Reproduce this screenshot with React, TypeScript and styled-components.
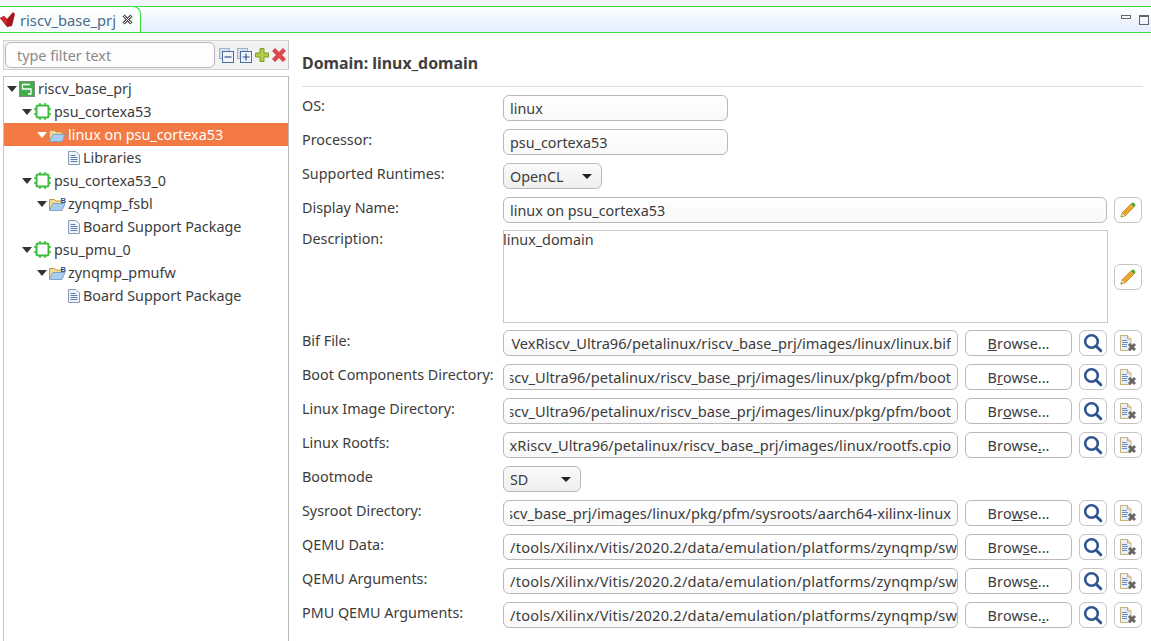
import React from 'react'
import styled, { createGlobalStyle } from 'styled-components'

const FONT = `'Noto Sans', 'Open Sans', sans-serif`

const GlobalStyle = createGlobalStyle`
  html, body { margin: 0; padding: 0; background: #fff; }
  body { font-family: ${FONT}; font-size: 14.35px; color: #3c3c3c; overflow: hidden; }
  * { box-sizing: border-box; }
`

type Row = { label: string; path: string; hot: number; start?: boolean }

const VITIS = '/tools/Xilinx/Vitis/2020.2/data/emulation/platforms/zynqmp/sw/'

const PATH_ROWS_1: Row[] = [
  { label: 'Bif File:', path: 'VexRiscv_Ultra96/petalinux/riscv_base_prj/images/linux/linux.bif', hot: 0 },
  { label: 'Boot Components Directory:', path: 'iscv_Ultra96/petalinux/riscv_base_prj/images/linux/pkg/pfm/boot', hot: 1 },
  { label: 'Linux Image Directory:', path: 'iscv_Ultra96/petalinux/riscv_base_prj/images/linux/pkg/pfm/boot', hot: 2 },
  { label: 'Linux Rootfs:', path: 'xRiscv_Ultra96/petalinux/riscv_base_prj/images/linux/rootfs.cpio', hot: 6 },
]

const PATH_ROWS_2: Row[] = [
  { label: 'Sysroot Directory:', path: 'iscv_base_prj/images/linux/pkg/pfm/sysroots/aarch64-xilinx-linux', hot: 3 },
  { label: 'QEMU Data:', path: VITIS, hot: 4, start: true },
  { label: 'QEMU Arguments:', path: VITIS, hot: 5, start: true },
  { label: 'PMU QEMU Arguments:', path: VITIS, hot: 7, start: true },
]

const TREE = [
  { depth: 0, kind: 'project', text: 'riscv_base_prj' },
  { depth: 1, kind: 'chip', text: 'psu_cortexa53' },
  { depth: 2, kind: 'folder', text: 'linux on psu_cortexa53', selected: true },
  { depth: 3, kind: 'doc', text: 'Libraries' },
  { depth: 1, kind: 'chip', text: 'psu_cortexa53_0' },
  { depth: 2, kind: 'bsp', text: 'zynqmp_fsbl' },
  { depth: 3, kind: 'doc', text: 'Board Support Package' },
  { depth: 1, kind: 'chip', text: 'psu_pmu_0' },
  { depth: 2, kind: 'bsp', text: 'zynqmp_pmufw' },
  { depth: 3, kind: 'doc', text: 'Board Support Package' },
]

function ProjectIcon() {
  return (
    <svg width="16" height="16" viewBox="0 0 16 16">
      <rect x="0.5" y="0.5" width="15" height="15" fill="#3fae49" stroke="#7d8f7f" />
      <path d="M11 3.5H3.5V8H12V13H9" fill="none" stroke="#fff" strokeWidth="1.3" />
    </svg>
  )
}

function ChipIcon() {
  return (
    <svg width="17" height="17" viewBox="0 0 17 17">
      <rect x="2.5" y="2.5" width="12" height="12" rx="1.5" fill="#fff" stroke="#3dbb3d" strokeWidth="2" />
      <path d="M6 0v2M11 0v2M6 15v2M11 15v2M0 6h2M0 11h2M15 6h2M15 11h2" stroke="#3dbb3d" strokeWidth="1.5" />
    </svg>
  )
}

function FolderIcon({ bsp }: { bsp?: boolean }) {
  return (
    <svg width="17" height="16" viewBox="0 0 17 16">
      <path d="M0.5 14V3.5h5l1.5 1.5h6v2" fill="#f3d896" stroke="#c49a4a" />
      <path d="M0.5 14.5L4 7.5h12l-3 7z" fill="#a9cdee" stroke="#7fa6c9" />
      {bsp && <text x="11.5" y="6.5" fontSize="7.5" fontWeight="700" fontFamily="'Liberation Sans', sans-serif" fill="#1f4f8f">B</text>}
    </svg>
  )
}

function DocIcon() {
  return (
    <svg width="12" height="14" viewBox="0 0 12 14">
      <path d="M0.5 0.5h7.5l3.5 3.5v9.5H0.5z" fill="#eef3fa" stroke="#8a9bb5" />
      <path d="M2.5 4.5h5M2.5 6.5h7M2.5 8.5h7M2.5 10.5h7" stroke="#5f7fb0" />
    </svg>
  )
}

const TREE_ICON: Record<string, React.ReactNode> = {
  project: <ProjectIcon />,
  chip: <ChipIcon />,
  folder: <FolderIcon />,
  bsp: <FolderIcon bsp />,
  doc: <DocIcon />,
}

function PencilIcon() {
  return (
    <svg width="16" height="16" viewBox="0 0 18 18">
      <path d="M1 17l1.2-4.6L12.6 2l3.4 3.4L5.6 15.8z" fill="#eda62c" stroke="#b5761a" strokeWidth="0.8" />
      <path d="M12.6 2l1-1c.6-.5 1.2-.5 1.8 0l1.6 1.6c.5.6.5 1.2 0 1.8l-1 1z" fill="#37a52f" />
      <path d="M1 17l1.2-4.6 3.4 3.4z" fill="#f3e2b4" />
      <path d="M1 17l.5-2 1.5 1.5z" fill="#2d8a2a" />
    </svg>
  )
}

function SearchIcon() {
  return (
    <svg width="20" height="20" viewBox="0 0 20 20">
      <circle cx="8.5" cy="8.5" r="6.3" fill="#fff" stroke="#2f5590" strokeWidth="2.6" />
      <path d="M13.5 13.5l4.3 4.3" stroke="#2f5590" strokeWidth="3" strokeLinecap="round" />
    </svg>
  )
}

function RemoveFileIcon() {
  return (
    <svg width="16" height="17" viewBox="0 0 16 17">
      <path d="M0.5 0.5h7l3.5 3.5v11.5H0.5z" fill="#e8eef8" stroke="#c9b27a" />
      <path d="M7.5 0.5v3.5H11" fill="#f4e6bd" stroke="#c9a85e" />
      <path d="M2 5.5h5M2 7.5h6M2 9.5h5M2 11.5h5" stroke="#6d8cc0" />
      <path d="M9 9l6 6M15 9l-6 6" stroke="#666" strokeWidth="3" />
    </svg>
  )
}

function CollapseIcon({ plus }: { plus?: boolean }) {
  return (
    <svg width="15" height="15" viewBox="0 0 15 15">
      <rect x="0.5" y="0.5" width="10" height="10" fill="#d5e1ef" stroke="#9db4cf" />
      <rect x="3.5" y="3.5" width="11" height="11" fill="#eef3fa" stroke="#4a6f9c" />
      <path d={plus ? 'M5.5 9h7M9 5.5v7' : 'M5.5 9h7'} stroke="#2f5590" strokeWidth="1.2" />
    </svg>
  )
}

function PlusIcon() {
  return (
    <svg width="14" height="14" viewBox="0 0 14 14">
      <path d="M5 0.5h4v4.5h4.5v4H9v4.5H5V9H0.5V5H5z" fill="#b4cc45" stroke="#7f9a2c" />
    </svg>
  )
}

function CrossIcon() {
  return (
    <svg width="14" height="14" viewBox="0 0 14 14">
      <path d="M1.5 1.5l11 11M12.5 1.5l-11 11" stroke="#d9484d" strokeWidth="4.4" />
    </svg>
  )
}

function Browse({ hot }: { hot: number }) {
  const word = 'Browse...'
  return (
    <BrowseButton>
      {word.split('').map((c, i) => (i === hot ? <u key={i}>{c}</u> : <span key={i}>{c}</span>))}
    </BrowseButton>
  )
}

function PathRow({ row }: { row: Row }) {
  return (
    <FormRow>
      <Label>{row.label}</Label>
      <PathInput $start={!!row.start}>
        <PathClip $start={!!row.start}><span>{row.path}</span></PathClip>
      </PathInput>
      <Browse hot={row.hot} />
      <IconButton><SearchIcon /></IconButton>
      <IconButton><RemoveFileIcon /></IconButton>
    </FormRow>
  )
}

export default function App() {
  return (
    <Page>
      <GlobalStyle />
      <TopStrip />
      <TabBar>
        <ActiveTab>
          <svg width="17" height="15" viewBox="0 0 17 15">
            <path d="M0 6l4-2 3 3 6-7 2 2-3 12-5 1z" fill="#a8171f" />
            <path d="M0 6l4-2 3 3v7z" fill="#d0282f" />
          </svg>
          <TabTitle>riscv_base_prj</TabTitle>
          <svg width="11" height="11" viewBox="0 0 11 11">
            <path d="M1.5 1.5l8 8M9.5 1.5l-8 8" stroke="#444" strokeWidth="3" />
            <path d="M1.5 1.5l8 8M9.5 1.5l-8 8" stroke="#fff" strokeWidth="1" />
          </svg>
        </ActiveTab>
        <TabControls>
          <MinimizeBox />
          <MaximizeBox />
        </TabControls>
      </TabBar>
      <Body>
        <Sidebar>
          <FilterBar>
            <FilterInput>type filter text</FilterInput>
            <FilterIcons>
              <CollapseIcon />
              <CollapseIcon plus />
              <PlusIcon />
              <CrossIcon />
            </FilterIcons>
          </FilterBar>
          <Tree>
            {TREE.map((n, i) => (
              <TreeRow key={i} $selected={!!n.selected} $depth={n.depth}>
                {n.kind !== 'doc' ? <Twisty $selected={!!n.selected} /> : <TwistySpace />}
                <TreeIcon $width={n.kind === 'chip' ? 20 : n.kind === 'doc' ? 18 : 19} $center={n.kind === 'doc'}>
                  {TREE_ICON[n.kind]}
                </TreeIcon>
                {n.text}
              </TreeRow>
            ))}
          </Tree>
        </Sidebar>
        <Detail>
          <Heading>Domain: linux_domain</Heading>
          <Rule />
          <Form>
            <FormRow>
              <Label>OS:</Label>
              <ReadOnlyInput>linux</ReadOnlyInput>
            </FormRow>
            <FormRow>
              <Label>Processor:</Label>
              <ReadOnlyInput>psu_cortexa53</ReadOnlyInput>
            </FormRow>
            <FormRow>
              <Label>Supported Runtimes:</Label>
              <Select $width={99}>OpenCL<Caret /></Select>
            </FormRow>
            <FormRow>
              <Label>Display Name:</Label>
              <WideInput>linux on psu_cortexa53</WideInput>
              <IconButton><PencilIcon /></IconButton>
            </FormRow>
            <DescriptionRow>
              <Label>Description:</Label>
              <DescriptionBox>linux_domain</DescriptionBox>
              <IconButton><PencilIcon /></IconButton>
            </DescriptionRow>
            {PATH_ROWS_1.map(r => <PathRow key={r.label} row={r} />)}
            <FormRow>
              <Label>Bootmode</Label>
              <Select $width={78}>SD<Caret /></Select>
            </FormRow>
            {PATH_ROWS_2.map(r => <PathRow key={r.label} row={r} />)}
          </Form>
        </Detail>
      </Body>
    </Page>
  )
}

const Page = styled.div`
  width: 1151px;
  height: 641px;
  display: flex;
  flex-direction: column;
  overflow: hidden;
`

const TopStrip = styled.div`
  height: 6px;
  background: #f0f5ff;
  flex: none;
`

const TabBar = styled.div`
  height: 27px;
  flex: none;
  display: flex;
  justify-content: space-between;
  align-items: stretch;
  border-top: 1px solid #3fdc3f;
  border-bottom: 1px solid #3fdc3f;
  background: linear-gradient(#fdfeff, #e4eeff);
`

const ActiveTab = styled.div`
  width: 141px;
  height: 26px;
  display: flex;
  align-items: center;
  gap: 3px;
  background: linear-gradient(#fff, #f4fbfb);
  border-right: 1px solid #3fdc3f;
  border-top-right-radius: 8px;
  margin-top: -1px;
  border-top: 1px solid #3fdc3f;
`

const TabTitle = styled.span`
  color: #4a6a8a;
  font-size: 14.7px;
  margin-right: 3px;
`

const TabControls = styled.div`
  display: flex;
  align-items: flex-start;
  gap: 8px;
  padding: 8px 2px 0 0;
`

const MinimizeBox = styled.div`
  width: 10px;
  height: 4px;
  border: 1px solid #666;
`

const MaximizeBox = styled.div`
  width: 10px;
  height: 10px;
  border: 1px solid #666;
  border-top-width: 2px;
`

const Body = styled.div`
  flex: 1;
  display: flex;
  min-height: 0;
`

const Sidebar = styled.div`
  width: 286px;
  margin-left: 3px;
  padding-top: 7px;
  flex: none;
  display: flex;
  flex-direction: column;
  gap: 6px;
`

const FilterBar = styled.div`
  height: 30px;
  display: flex;
  align-items: center;
  justify-content: space-between;
  padding: 0 1px;
  background: #f2f2f2;
  border: 1px solid #d4d4d4;
  border-right: 1px solid #c4c4c4;
`

const FilterInput = styled.div`
  width: 210px;
  height: 26px;
  display: flex;
  align-items: center;
  padding-left: 11px;
  color: #8a8a8a;
  background: #fdfdfd;
  border: 1px solid #b8b8b8;
  border-radius: 6px;
`

const FilterIcons = styled.div`
  display: flex;
  align-items: center;
  gap: 3px;
  padding-right: 1px;
`

const Tree = styled.div`
  flex: 1;
  border: 1px solid #c4c4c4;
  border-bottom: none;
  border-right: 1px solid #b8b8b8;
`

const TreeRow = styled.div<{ $selected: boolean; $depth: number }>`
  height: 23px;
  display: flex;
  align-items: center;
  padding-left: ${p => 2 + p.$depth * 15}px;
  white-space: nowrap;
  background: ${p => (p.$selected ? '#f47a45' : 'transparent')};
  color: ${p => (p.$selected ? '#fff' : '#3c3c3c')};
`

const Twisty = styled.span<{ $selected: boolean }>`
  width: 0;
  height: 0;
  margin: 0 2px 0 1px;
  border-left: 5.5px solid transparent;
  border-right: 5.5px solid transparent;
  border-top: 6px solid ${p => (p.$selected ? '#fff' : '#333')};
`

const TwistySpace = styled.span`
  width: 14px;
  flex: none;
`

const TreeIcon = styled.span<{ $width: number; $center: boolean }>`
  display: inline-flex;
  align-items: center;
  justify-content: ${p => (p.$center ? 'center' : 'flex-start')};
  width: ${p => p.$width}px;
  flex: none;
`

const Detail = styled.div`
  flex: 1;
  min-width: 0;
  padding: 0 8px 0 13px;
`

const Heading = styled.h1`
  margin: 0;
  height: 53px;
  display: flex;
  align-items: center;
  padding-top: 7px;
  font-size: 15.9px;
  font-weight: 700;
  color: #404040;
`

const Rule = styled.div`
  height: 1px;
  background: #dcdcdc;
  margin-bottom: 8px;
`

const Form = styled.div`
  display: flex;
  flex-direction: column;
  gap: 8px;
`

const FormRow = styled.div`
  height: 26px;
  display: flex;
  align-items: center;
  gap: 7px;
`

const Label = styled.div`
  width: 201px;
  flex: none;
  margin-right: -7px;
  position: relative;
  top: -3px;
  white-space: nowrap;
`

const fieldBorder = `
  border: 1px solid #b9b9b9;
  border-radius: 6px;
  background: linear-gradient(#fff, #f8f8f8);
`

const ReadOnlyInput = styled.div`
  width: 225px;
  height: 26px;
  display: flex;
  align-items: center;
  padding-left: 6px;
  ${fieldBorder}
`

const WideInput = styled(ReadOnlyInput)`
  width: 604px;
`

const PathInput = styled.div<{ $start: boolean }>`
  width: 455px;
  height: 26px;
  flex: none;
  display: flex;
  align-items: center;
  padding: ${p => (p.$start ? '0 0 0 6px' : '0 6px 0 6px')};
  font-size: 14.6px;
  letter-spacing: ${p => (p.$start ? '0.22px' : '0')};
  ${fieldBorder}
`

const PathClip = styled.div<{ $start: boolean }>`
  flex: 1;
  min-width: 0;
  display: flex;
  justify-content: ${p => (p.$start ? 'flex-start' : 'flex-end')};
  overflow: hidden;
  white-space: nowrap;
  span { flex: none; }
`

const Select = styled.div<{ $width: number }>`
  width: ${p => p.$width}px;
  height: 26px;
  display: flex;
  align-items: center;
  justify-content: space-between;
  padding: 0 9px 0 6px;
  border: 1px solid #b9b9b9;
  border-radius: 6px;
  background: linear-gradient(#fafafa, #efefef);
`

const Caret = styled.span`
  width: 0;
  height: 0;
  border-left: 5px solid transparent;
  border-right: 5px solid transparent;
  border-top: 5px solid #222;
`

const DescriptionRow = styled.div`
  height: 93px;
  margin-top: -1px;
  margin-bottom: -1px;
  display: flex;
  align-items: flex-start;
  gap: 6px;

  > :first-child { top: -1px; margin-right: -6px; }
  > :last-child { margin-top: 34px; }
`

const DescriptionBox = styled.div`
  width: 605px;
  height: 93px;
  flex: none;
  line-height: 17px;
  text-indent: -1px;
  border: 1px solid #c8c8c8;
  background: #fff;
`

const BrowseButton = styled.div`
  width: 107px;
  height: 26px;
  flex: none;
  display: flex;
  align-items: center;
  justify-content: center;
  border: 1px solid #b9b9b9;
  border-radius: 6px;
  background: #fff;
  u, span { white-space: pre; }
`

const IconButton = styled.div`
  width: 28px;
  height: 26px;
  flex: none;
  display: flex;
  align-items: center;
  justify-content: center;
  border: 1px solid #c4c4c4;
  border-radius: 6px;
  background: #fff;
`
